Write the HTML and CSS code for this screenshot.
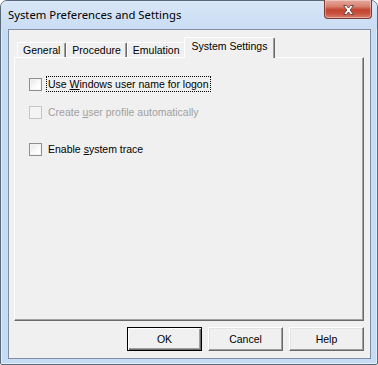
FILE: index.html
```html
<!DOCTYPE html>
<html>
<head>
<meta charset="utf-8">
<link rel="stylesheet" href="styles.css">
</head>
<body>
<div class="window">
  <div class="titlebar">
    <span class="title">System Preferences and Settings</span>
    <div class="close">
      <svg width="17" height="12" viewBox="0 0 17 12">
        <path d="M3.5 1.5 L6.5 1.5 L8.5 4 L10.5 1.5 L13.5 1.5 L10.2 6 L13.5 10.5 L10.5 10.5 L8.5 8 L6.5 10.5 L3.5 10.5 L6.8 6 Z" fill="#fff" stroke="#6b4a44" stroke-width="1" stroke-linejoin="round"/>
      </svg>
    </div>
  </div>
  <div class="client">
    <div class="tabs">
      <div class="tab">General</div>
      <div class="tab">Procedure</div>
      <div class="tab">Emulation</div>
      <div class="tab active">System Settings</div>
    </div>
    <div class="panel">
      <div class="row">
        <span class="box"></span>
        <span class="label focus">Use <u>W</u>indows user name for logon</span>
      </div>
      <div class="row disabled">
        <span class="box"></span>
        <span class="label">Create <u>u</u>ser profile automatically</span>
      </div>
      <div class="row gap">
        <span class="box"></span>
        <span class="label">Enable <u>s</u>ystem trace</span>
      </div>
    </div>
    <div class="buttons">
      <div class="btn default"><span>OK</span></div>
      <div class="btn"><span>Cancel</span></div>
      <div class="btn"><span>Help</span></div>
    </div>
  </div>
</div>
</body>
</html>
```
FILE: styles.css
```css
html, body {
  margin: 0;
  padding: 0;
  background: #ffffff;
}
body {
  font-family: "Liberation Sans", Arial, sans-serif;
  font-size: 10.5px;
  color: #000;
}
.window {
  box-sizing: border-box;
  width: 378px;
  height: 365px;
  border: 1px solid #5b6a7b;
  border-radius: 7px 7px 2px 2px;
  background: #c6dcf5;
  padding: 0 6px 5px 7px;
  display: flex;
  flex-direction: column;
  box-shadow: inset 1px 1px 0 #e4eefa, inset -1px -1px 0 #e4eefa;
}
.titlebar {
  height: 28px;
  display: flex;
  justify-content: space-between;
  align-items: flex-start;
  background: linear-gradient(#d9e6f6, #c9ddf5);
  margin: 0 -6px 0 -7px;
  padding: 0 5px 0 7px;
  border-radius: 6px 6px 0 0;
}
.title {
  font-family: "Noto Sans", "Liberation Sans", sans-serif;
  font-size: 11.3px;
  margin-top: 6px;
  color: #000;
}
.close {
  box-sizing: border-box;
  width: 48px;
  height: 19px;
  margin-top: -1px;
  border: 1px solid #7a3a33;
  border-top: none;
  border-radius: 0 0 4px 4px;
  background: linear-gradient(#e5a99e 0%, #d98271 35%, #c24430 55%, #c7513d 75%, #d9806f 100%);
  box-shadow: inset 0 0 0 1px rgba(255,255,255,0.35);
  display: flex;
  align-items: center;
  justify-content: center;
}
.close svg { display: block; margin-top: 1px; }
.client {
  flex: 1;
  box-sizing: border-box;
  border: 1px solid #7f8fa1;
  background: #f0f0f0;
  padding: 7px 6px 7px 5px;
  display: flex;
  flex-direction: column;
}
.tabs {
  display: flex;
  align-items: flex-end;
  height: 20px;
  padding-left: 3px;
  position: relative;
  z-index: 2;
}
.tab {
  box-sizing: border-box;
  height: 15px;
  line-height: 14px;
  padding: 0 5px 0 5px;
  border-top: 1px solid #fff;
  border-left: 1px solid #fff;
  border-right: 1px solid #696969;
  box-shadow: inset -1px 0 0 #a0a0a0;
  border-radius: 2px 2px 0 0;
  background: #f0f0f0;
  white-space: nowrap;
}
.tab.active {
  height: 21px;
  margin: 0 0 -1px -2px;
  padding: 0 7px 0 7px;
  line-height: 16px;
}
.panel {
  flex: 1;
  box-sizing: border-box;
  border-top: 1px solid #fff;
  border-left: 1px solid #fff;
  border-right: 1px solid #696969;
  border-bottom: 1px solid #696969;
  box-shadow: inset -1px -1px 0 #a0a0a0;
  padding: 18px 0 0 14px;
  display: flex;
  flex-direction: column;
}
.row {
  display: flex;
  align-items: center;
  height: 16px;
  margin-bottom: 12px;
}
.row.gap { margin-top: 9px; }
.box {
  box-sizing: border-box;
  width: 13px;
  height: 13px;
  border: 1px solid #8e8f8f;
  background: linear-gradient(135deg, #e6e6e6, #ffffff 70%);
  box-shadow: inset 0 0 0 1px #f4f4f4;
  margin-right: 4px;
  flex: none;
}
.label {
  box-sizing: border-box;
  height: 16px;
  line-height: 15px;
  padding: 0 1px 0 1px;
  border: 1px solid transparent;
  white-space: nowrap;
}
.label.focus {
  border: 1px dotted #000;
}
.disabled .box {
  border-color: #c5c5c5;
  background: #f4f4f4;
  box-shadow: none;
}
.disabled .label { color: #a0a0a0; }
.buttons {
  display: flex;
  justify-content: flex-end;
  gap: 6px;
  margin-top: 6px;
}
.btn {
  box-sizing: border-box;
  width: 75px;
  height: 24px;
  background: #f0f0f0;
  border-top: 1px solid #fff;
  border-left: 1px solid #fff;
  border-right: 1px solid #696969;
  border-bottom: 1px solid #696969;
  box-shadow: inset -1px -1px 0 #a0a0a0, inset 1px 1px 0 #e3e3e3;
  display: flex;
  align-items: center;
  justify-content: center;
}
.btn.default {
  border: 1px solid #000;
  box-shadow: inset 1px 1px 0 #fff, inset -1px -1px 0 #696969, inset -2px -2px 0 #a0a0a0;
}
```
